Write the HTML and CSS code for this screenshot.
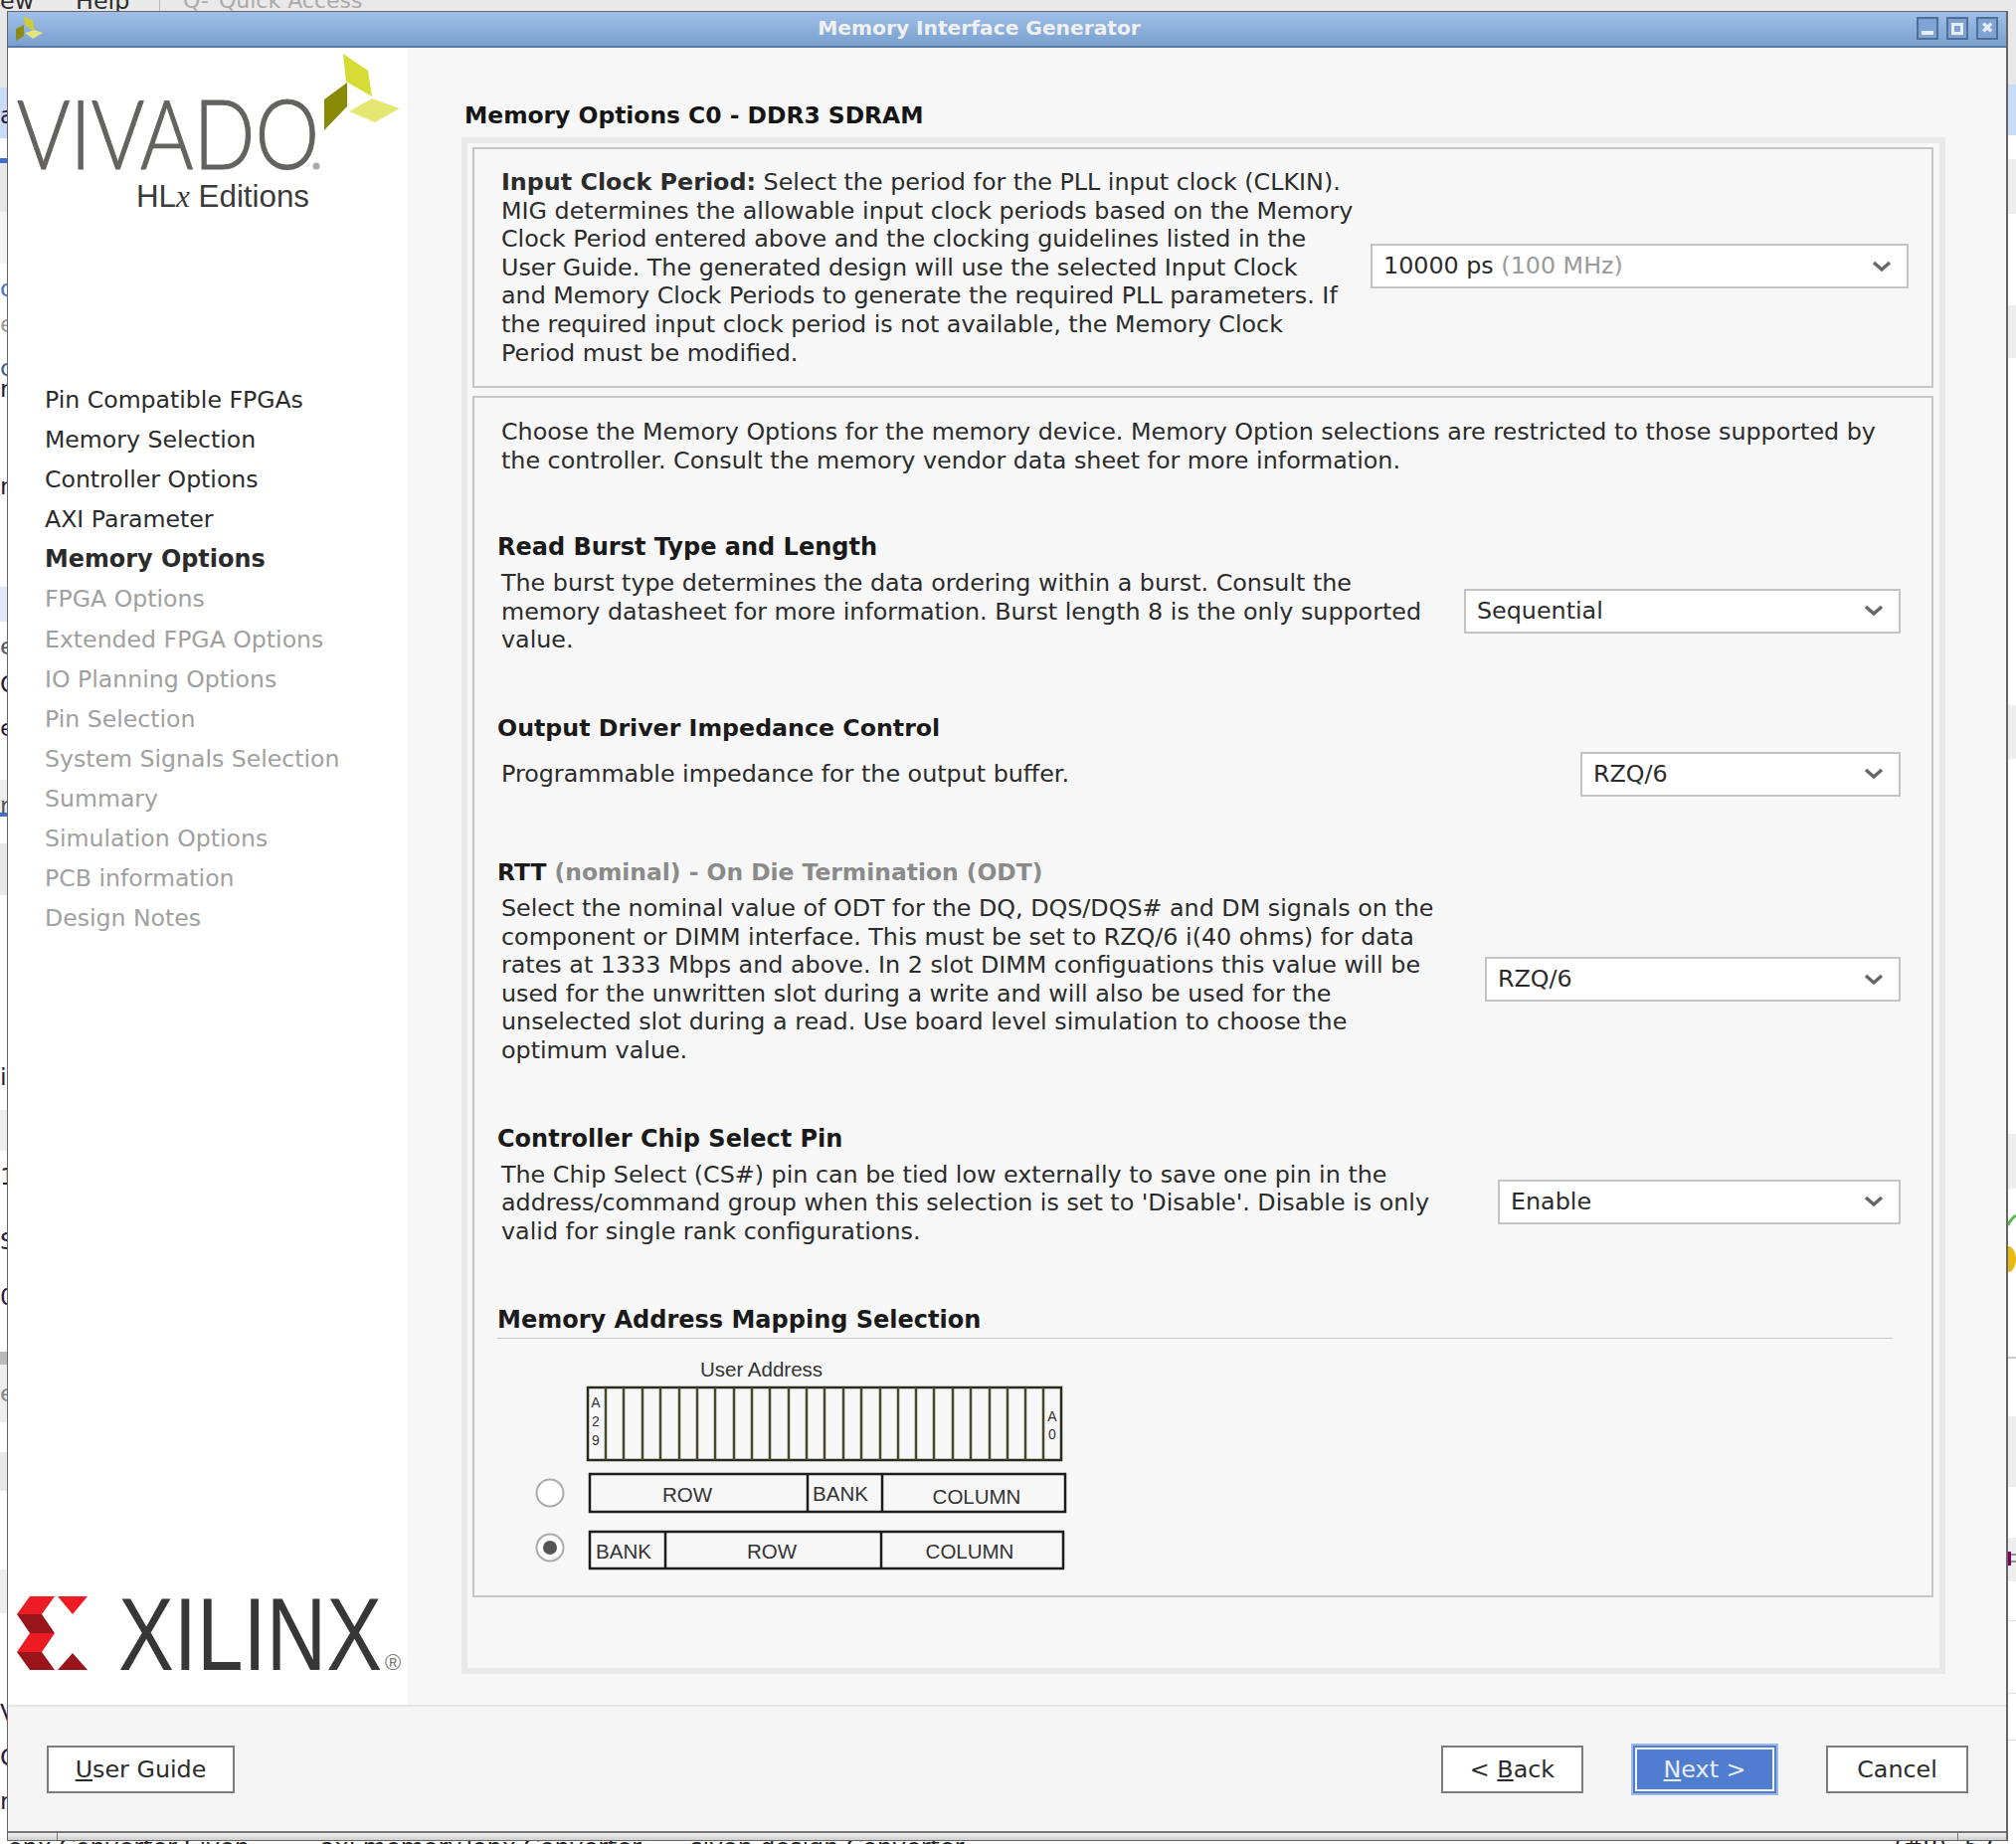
FILE: index.html
```html
<!doctype html>
<html>
<head>
<meta charset="utf-8">
<link rel="stylesheet" href="styles.css">
<title>Memory Interface Generator</title>
</head>
<body>

<div class="backdrop">
  <div class="menubar">
    <span class="menu-a">ew</span>
    <span class="menu-b">Help</span>
    <i class="menu-sep"></i>
    <span class="menu-c">Q-</span>
    <span class="menu-d">Quick Access</span>
  </div>
  <div class="strip-left">
    <span class="frag f1">a</span>
    <span class="frag f2">o</span>
    <span class="frag f3">e</span>
    <span class="frag f4">c</span>
    <span class="frag f5">r</span>
    <span class="frag f6">r</span>
    <span class="frag f7">e</span>
    <span class="frag f8">O</span>
    <span class="frag f9">e</span>
    <span class="frag f10">r</span>
    <span class="frag f11">i</span>
    <span class="frag f12">1</span>
    <span class="frag f13">S</span>
    <span class="frag f14">0</span>
    <span class="frag f15">e</span>
    <span class="frag f16">V</span>
    <span class="frag f17">O</span>
    <span class="frag f18">n</span>
  </div>
  <div class="strip-right">
    <svg class="strip-marks" width="8" height="400" viewBox="0 0 8 400">
      <path d="M0 12 Q3 5 8 2" fill="none" stroke="#57b84a" stroke-width="3"/>
      <ellipse cx="0" cy="46" rx="8" ry="13" fill="#e8b90f"/>
      <rect x="0" y="340" width="3" height="14" fill="#800060"/>
      <path d="M3 343H8M3 350H8" stroke="#333" stroke-width="1"/>
    </svg>
  </div>
  <div class="tabs-under">
    <span class="tab-a">onx Converter Sivon</span>
    <span class="tab-b">axi memory.lonx Converter</span>
    <span class="tab-c">sivon design Converter</span>
    <span class="tab-d">(#8)</span>
    <span class="tab-e">57</span>
  </div>
</div>

<div class="window">
  <div class="titlebar">
    <svg class="title-icon" width="30" height="30" viewBox="0 0 30 30">
      <polygon points="8,0 17,5 19,16 9,9" fill="#cfcb38"/>
      <polygon points="0,13 8,9 8,20 0,25" fill="#8d8a12"/>
      <polygon points="9,17 19,14 27,17 17,23" fill="#e2e480"/>
    </svg>
    <span class="title-text">Memory Interface Generator</span>
    <div class="win-buttons">
      <span class="win-btn"><i class="glyph-min"></i></span>
      <span class="win-btn"><i class="glyph-max"></i></span>
      <span class="win-btn"><b class="glyph-close">&#10006;</b></span>
    </div>
  </div>

  <div class="main">
    <aside class="sidebar">
      <svg class="vivado" width="402" height="190" viewBox="0 0 402 190">
        <text x="9" y="122" class="vivado-word" textLength="304" lengthAdjust="spacingAndGlyphs">VIVADO</text>
        <circle cx="310" cy="119" r="3.5" fill="#aaa"/>
        <text x="129" y="160" class="hlx">HL<tspan class="hlx-x">x</tspan> Editions</text>
        <polygon points="337,6 362,23 366,49 340,34" fill="#d6dc34"/>
        <polygon points="318,52 341,35 341,59 318,83" fill="#888a05"/>
        <polygon points="343,64 366,51 394,61 369,75" fill="#e4e873"/>
      </svg>

      <ul class="steps">
        <li>Pin Compatible FPGAs</li>
        <li>Memory Selection</li>
        <li>Controller Options</li>
        <li>AXI Parameter</li>
        <li class="current">Memory Options</li>
        <li class="todo">FPGA Options</li>
        <li class="todo">Extended FPGA Options</li>
        <li class="todo">IO Planning Options</li>
        <li class="todo">Pin Selection</li>
        <li class="todo">System Signals Selection</li>
        <li class="todo">Summary</li>
        <li class="todo">Simulation Options</li>
        <li class="todo">PCB information</li>
        <li class="todo">Design Notes</li>
      </ul>

      <svg class="xilinx" width="402" height="90" viewBox="0 0 402 90">
        <polygon points="22,0 47,0 34,18 9,18" fill="#ed1c24"/>
        <polygon points="9,18 34,18 47,37 22,37" fill="#9a141c"/>
        <polygon points="22,37 47,37 34,56 9,56" fill="#ed1c24"/>
        <polygon points="9,56 34,56 47,74 22,74" fill="#9a141c"/>
        <polygon points="50,0 80,0 65,18" fill="#ed1c24"/>
        <polygon points="50,74 65,57 80,74" fill="#9a141c"/>
        <text x="111" y="74" class="xilinx-word" textLength="265" lengthAdjust="spacingAndGlyphs">XILINX</text>
        <text x="379" y="74" class="reg">&#174;</text>
      </svg>
    </aside>

    <section class="content">
      <h2 class="page-title">Memory Options C0 - DDR3 SDRAM</h2>
      <div class="outer-panel">
        <div class="panel clock-panel">
          <p class="clock-text"><b>Input Clock Period:</b> Select the period for the PLL input clock (CLKIN).<br>
          MIG determines the allowable input clock periods based on the Memory<br>
          Clock Period entered above and the clocking guidelines listed in the<br>
          User Guide. The generated design will use the selected Input Clock<br>
          and Memory Clock Periods to generate the required PLL parameters. If<br>
          the required input clock period is not available, the Memory Clock<br>
          Period must be modified.</p>
          <div class="select clock-select"><span>10000 ps <em>(100 MHz)</em></span><svg class="chev" width="20" height="12" viewBox="0 0 20 12"><path d="M2 2 L10 9 L18 2" /></svg></div>
        </div>

        <div class="panel options-panel">
          <p class="intro">Choose the Memory Options for the memory device. Memory Option selections are restricted to those supported by<br>
          the controller. Consult the memory vendor data sheet for more information.</p>

          <h3 class="opt-head head-burst">Read Burst Type and Length</h3>
          <div class="opt-row row-burst">
            <p>The burst type determines the data ordering within a burst. Consult the<br>
            memory datasheet for more information. Burst length 8 is the only supported<br>
            value.</p>
            <div class="select sel-burst"><span>Sequential</span><svg class="chev" width="20" height="12" viewBox="0 0 20 12"><path d="M2 2 L10 9 L18 2" /></svg></div>
          </div>

          <h3 class="opt-head head-driver">Output Driver Impedance Control</h3>
          <div class="opt-row row-driver">
            <p>Programmable impedance for the output buffer.</p>
            <div class="select sel-driver"><span>RZQ/6</span><svg class="chev" width="20" height="12" viewBox="0 0 20 12"><path d="M2 2 L10 9 L18 2" /></svg></div>
          </div>

          <h3 class="opt-head head-rtt">RTT <span class="head-dim">(nominal) - On Die Termination (ODT)</span></h3>
          <div class="opt-row row-rtt">
            <p>Select the nominal value of ODT for the DQ, DQS/DQS# and DM signals on the<br>
            component or DIMM interface. This must be set to RZQ/6 i(40 ohms) for data<br>
            rates at 1333 Mbps and above. In 2 slot DIMM configuations this value will be<br>
            used for the unwritten slot during a write and will also be used for the<br>
            unselected slot during a read. Use board level simulation to choose the<br>
            optimum value.</p>
            <div class="select sel-rtt"><span>RZQ/6</span><svg class="chev" width="20" height="12" viewBox="0 0 20 12"><path d="M2 2 L10 9 L18 2" /></svg></div>
          </div>

          <h3 class="opt-head head-chip">Controller Chip Select Pin</h3>
          <div class="opt-row row-chip">
            <p>The Chip Select (CS#) pin can be tied low externally to save one pin in the<br>
            address/command group when this selection is set to 'Disable'. Disable is only<br>
            valid for single rank configurations.</p>
            <div class="select sel-chip"><span>Enable</span><svg class="chev" width="20" height="12" viewBox="0 0 20 12"><path d="M2 2 L10 9 L18 2" /></svg></div>
          </div>

          <h3 class="opt-head head-map">Memory Address Mapping Selection</h3>
          <svg class="mapping" width="640" height="240" viewBox="0 0 640 240">
            <text x="207" y="35" class="map-title">User Address</text>
            <g class="slots" transform="translate(2 0)">
              <rect x="92" y="46" width="476" height="73"/>
              <path d="M110 46V119M128 46V119M147 46V119M165 46V119M184 46V119M202 46V119M220 46V119M239 46V119M257 46V119M275 46V119M294 46V119M312 46V119M330 46V119M349 46V119M367 46V119M386 46V119M404 46V119M422 46V119M440 46V119M459 46V119M477 46V119M496 46V119M514 46V119M532 46V119M550 46V119"/>
              <text class="bit" x="100" y="66">A</text>
              <text class="bit" x="100" y="85">2</text>
              <text class="bit" x="100" y="104">9</text>
              <text class="bit" x="559" y="80">A</text>
              <text class="bit" x="559" y="98">0</text>
            </g>

            <circle cx="56" cy="152" r="13.5" class="radio"/>
            <circle cx="56" cy="207" r="13.5" class="radio"/>
            <circle cx="56" cy="207" r="7" fill="#555"/>

            <g class="rows" transform="translate(2 0)">
              <rect x="94" y="133" width="478" height="38"/>
              <path d="M313 133V171M388 133V171"/>
              <rect x="94" y="191" width="476" height="37"/>
              <path d="M170 191V228M387 191V228"/>
              <text class="cell" x="192" y="161">ROW</text>
              <text class="cell" x="346" y="160">BANK</text>
              <text class="cell" x="483" y="163">COLUMN</text>
              <text class="cell" x="128" y="218">BANK</text>
              <text class="cell" x="277" y="218">ROW</text>
              <text class="cell" x="476" y="218">COLUMN</text>
            </g>
          </svg>
        </div>
      </div>
    </section>
  </div>

  <div class="footer">
    <button class="btn btn-guide"><u>U</u>ser Guide</button>
    <div class="footer-right">
      <button class="btn">&lt; <u>B</u>ack</button>
      <button class="btn btn-next"><u>N</u>ext &gt;</button>
      <button class="btn">Cancel</button>
    </div>
  </div>
  <div class="statusline">
    <i class="status-left"></i>
    <i class="status-right"></i>
  </div>
</div>

</body>
</html>
```

FILE: styles.css
```css
html, body {
    margin: 0;
    padding: 0;
}
body {
    width: 2027px;
    height: 1854px;
    overflow: hidden;
    position: relative;
    background-color: #ffffff;
    font-family: "DejaVu Sans", sans-serif;
    font-size: 23.8px;
    line-height: 28.6px;
    color: #2b2b2b;
}
p, h2, h3, ul {
    margin: 0;
    padding: 0;
}

/* what shows around the dialog */
.backdrop {
    position: absolute;
    left: 0;
    top: 0;
    width: 2027px;
    height: 1854px;
    overflow: hidden;
}
.menubar {
    height: 12px;
    background-color: #e9e9e9;
    position: relative;
    overflow: hidden;
}
.menubar span {
    position: absolute;
    top: -13px;
    white-space: nowrap;
}
.menu-a { left: 0; }
.menu-b { left: 76px; }
.menu-sep {
    position: absolute;
    left: 160px;
    top: 0;
    width: 1px;
    height: 12px;
    background-color: #bbb;
}
.menubar .menu-c { left: 184px; color: #aaa; font-size: 22px; }
.menubar .menu-d { left: 220px; color: #aaa; font-size: 22px; }

.strip-left {
    position: absolute;
    left: 0;
    top: 12px;
    width: 8px;
    height: 1840px;
    overflow: hidden;
    background: linear-gradient(
        #e8e8e8 0, #e8e8e8 76px,
        #c8dbf8 76px, #c8dbf8 127px,
        #fff 127px, #fff 147px,
        #3f6fd0 147px, #3f6fd0 152px,
        #e8e8e8 152px, #e8e8e8 201px,
        #f3f3f3 201px, #f3f3f3 253px,
        #fff 253px, #fff 578px,
        #dfe8f7 578px, #dfe8f7 613px,
        #fff 613px, #fff 772px,
        #eee 772px, #eee 805px,
        #3f6fd0 805px, #3f6fd0 809px,
        #fff 809px, #fff 836px,
        #e8e8e8 836px, #e8e8e8 888px,
        #fff 888px, #fff 1104px,
        #eee 1104px, #eee 1145px,
        #fff 1145px, #fff 1347px,
        #bbb 1347px, #bbb 1360px,
        #eee 1360px, #eee 1418px,
        #fff 1418px, #fff 1448px,
        #e8e8e8 1448px, #e8e8e8 1487px,
        #fff 1487px, #fff 1566px,
        #eee 1566px, #eee 1610px,
        #fff 1610px
    );
}
.frag {
    position: absolute;
    left: 0;
    line-height: 24px;
    color: #2a1a40;
}
.f1 { top: 92px; }
.f2 { top: 266px; color: #3f6fd0; }
.f3 { top: 302px; color: #999; }
.f4 { top: 346px; color: #3a5f90; }
.f5 { top: 367px; }
.f6 { top: 465px; }
.f7 { top: 626px; color: #556; }
.f8 { top: 664px; }
.f9 { top: 708px; }
.f10 { top: 786px; color: #556; }
.f11 { top: 1059px; }
.f12 { top: 1159px; }
.f13 { top: 1224px; }
.f14 { top: 1280px; }
.f15 { top: 1377px; color: #888; }
.f16 { top: 1698px; }
.f17 { top: 1743px; }
.f18 { top: 1787px; }

.strip-right {
    position: absolute;
    left: 2019px;
    top: 12px;
    width: 8px;
    height: 1840px;
    overflow: hidden;
    background: linear-gradient(
        #e8e8e8 0, #e8e8e8 73px,
        #c8dbf8 73px, #c8dbf8 124px,
        #fff 124px, #fff 148px,
        #eee 148px, #eee 203px,
        #fff 203px, #fff 295px,
        #eee 295px, #eee 348px,
        #fff 348px, #fff 697px,
        #eee 697px, #eee 751px,
        #fff 751px, #fff 1128px,
        #eee 1128px, #eee 1183px,
        #fff 1183px, #fff 1352px,
        #ccc 1352px, #ccc 1354px,
        #fff 1354px, #fff 1412px,
        #eee 1412px, #eee 1483px,
        #fff 1483px, #fff 1534px,
        #eee 1534px, #eee 1578px,
        #fff 1578px, #fff 1617px,
        #ddd 1617px, #ddd 1618px,
        #fff 1618px, #fff 1690px,
        #ddd 1690px, #ddd 1691px,
        #fff 1691px, #fff 1737px,
        #ddd 1737px, #ddd 1738px,
        #fff 1738px
    );
}
.strip-marks {
    position: absolute;
    left: 0;
    top: 1208px;
}
.tabs-under {
    position: absolute;
    left: 0;
    top: 1851px;
    width: 2027px;
    height: 3px;
    overflow: hidden;
    background-color: #fff;
}
.tabs-under span {
    position: absolute;
    top: -8px;
    white-space: nowrap;
    color: #222;
}
.tab-a { left: 8px; }
.tab-b { left: 322px; }
.tab-c { left: 694px; }
.tab-d { left: 1904px; }
.tab-e { left: 1975px; }

/* dialog */
.window {
    position: absolute;
    left: 7px;
    top: 11px;
    width: 2012px;
    height: 1840px;
    box-sizing: border-box;
    border-style: solid;
    border-color: #666;
    border-width: 1px 2px 1px 1px;
    background-color: #f7f7f7;
    display: flex;
    flex-direction: column;
}
.titlebar {
    height: 34px;
    flex: none;
    background: linear-gradient(#9fbfe8, #7aa0cf);
    border-bottom: 2px solid #5679a8;
    position: relative;
    display: flex;
    align-items: center;
    justify-content: center;
}
.title-icon {
    position: absolute;
    left: 8px;
    top: 4px;
}
.title-text {
    color: #f0f0f0;
    font-weight: bold;
    font-size: 20.2px;
    margin-right: 56px;
    margin-top: -1px;
}
.win-buttons {
    position: absolute;
    right: 8px;
    top: 5px;
    display: flex;
    gap: 8px;
}
.win-btn {
    width: 22px;
    height: 23px;
    box-sizing: border-box;
    border: 2px solid #4f6f98;
    background-color: #7fa3d3;
    display: flex;
    align-items: center;
    justify-content: center;
}
.glyph-min {
    width: 12px;
    height: 4px;
    background-color: #e8eef7;
    margin-top: 8px;
}
.glyph-max {
    width: 6px;
    height: 6px;
    border: 3px solid #e8eef7;
}
.glyph-close {
    color: #e8eef7;
    font-size: 15px;
    line-height: 15px;
}

.main {
    flex: none;
    height: 1666px;
    display: flex;
}
.sidebar {
    width: 402px;
    flex: none;
    background-color: #ffffff;
    display: flex;
    flex-direction: column;
}
.vivado {
    display: block;
    flex: none;
}
.vivado-word {
    font-family: Lato, sans-serif;
    font-weight: 300;
    font-size: 96px;
    fill: #646360;
    stroke: #646360;
    stroke-width: 1.2;
}
.hlx {
    font-family: "Liberation Sans", sans-serif;
    font-size: 31.3px;
    fill: #3a3a3a;
}
.hlx-x {
    font-family: "Liberation Serif", serif;
    font-style: italic;
}
.steps {
    list-style: none;
    margin-top: 144px;
    margin-left: 37px;
}
.steps li {
    height: 40.1px;
    line-height: 40.1px;
    white-space: nowrap;
    font-size: 23.6px;
}
.steps .current {
    font-weight: bold;
    font-size: 23.9px;
}
.steps .todo {
    color: #a0a0a0;
}
.xilinx {
    display: block;
    margin-top: auto;
    margin-bottom: 19px;
    flex: none;
}
.xilinx-word {
    font-family: "Liberation Sans", sans-serif;
    font-size: 104px;
    fill: #373737;
}
.reg {
    font-family: "Liberation Sans", sans-serif;
    font-size: 22px;
    fill: #777;
}

.content {
    flex: 1;
    padding: 0 54px 0 56px;
}
.page-title {
    font-size: 23.4px;
    line-height: 30px;
    padding: 53px 0 7px 0;
    margin-left: 1px;
    color: #151515;
}
.outer-panel {
    width: 1492px;
    height: 1545px;
    box-sizing: border-box;
    border: 6px solid #e8e8e8;
    padding: 4px 6px 0 5px;
    margin-left: -2px;
}
.panel {
    border: 2px solid #c6c6c6;
    box-sizing: border-box;
}
.clock-panel {
    height: 242px;
    margin-bottom: 8px;
    padding: 19px 0 0 27px;
    position: relative;
}
.clock-text {
    white-space: nowrap;
}
.select {
    background-color: #ffffff;
    border: 2px solid #c4c4c4;
    box-sizing: border-box;
    height: 45px;
    display: flex;
    align-items: center;
    justify-content: space-between;
    padding: 0 15px 0 11px;
    flex: none;
    white-space: nowrap;
}
.select em {
    font-style: normal;
    color: #9a9a9a;
}
.chev {
    display: block;
    fill: none;
    stroke: #666;
    stroke-width: 3.4;
}
.clock-select {
    position: absolute;
    left: 901px;
    top: 95px;
    width: 541px;
}
.options-panel {
    height: 1208px;
    padding: 20px 0 0 23px;
}
.intro {
    white-space: nowrap;
    margin-left: 4px;
}
.opt-head {
    font-size: 24px;
    line-height: 30px;
    font-weight: bold;
    white-space: nowrap;
    color: #1a1a1a;
}
.head-dim {
    color: #8a8a8a;
}
.opt-row {
    display: flex;
    justify-content: space-between;
    align-items: center;
    padding-left: 4px;
    padding-right: 31px;
}
.opt-row p {
    white-space: nowrap;
}
.head-burst { margin-top: 58px; }
.row-burst { margin-top: 7px; }
.sel-burst { width: 439px; margin-top: -2px; }
.head-driver { margin-top: 59px; font-size: 23.7px; }
.row-driver { margin-top: 9px; }
.sel-driver { width: 322px; }
.head-rtt { margin-top: 61px; font-size: 23.4px; }
.row-rtt { margin-top: 7px; }
.sel-rtt { width: 418px; }
.head-chip { margin-top: 59px; }
.row-chip { margin-top: 7px; }
.sel-chip { width: 405px; margin-top: -2px; }
.head-map {
    margin-top: 60px;
    width: 1403px;
    border-bottom: 1px solid #c8c8c8;
    padding-bottom: 3px;
}
.mapping {
    display: block;
    margin: 3px 0 0 -3px;
}
.map-title {
    font-family: "Liberation Sans", sans-serif;
    font-size: 20.5px;
    fill: #333;
}
.slots rect, .slots path {
    fill: none;
    stroke: #47472c;
    stroke-width: 2.5;
}
.slots rect {
    stroke: #2a2a1c;
}
.rows rect, .rows path {
    fill: none;
    stroke: #1c1c1c;
    stroke-width: 2.5;
}
.bit {
    font-family: "Liberation Sans", sans-serif;
    font-size: 14px;
    text-anchor: middle;
    fill: #333;
}
.cell {
    font-family: "Liberation Sans", sans-serif;
    font-size: 20.5px;
    text-anchor: middle;
    fill: #333;
}
.radio {
    fill: #ffffff;
    stroke: #aaa;
    stroke-width: 2;
}

.footer {
    flex: 1;
    border-top: 2px solid #e6e6e6;
    background-color: #f5f5f5;
    display: flex;
    align-items: flex-start;
    justify-content: space-between;
    padding: 39px 39px 0 39px;
}
.footer-right {
    display: flex;
    gap: 48px;
    align-items: center;
    margin-top: -2px;
    margin-right: -1px;
}
.btn {
    font-family: "DejaVu Sans", sans-serif;
    font-size: 23.8px;
    color: #2b2b2b;
    background-color: #ffffff;
    border: 2px solid #7c7c7c;
    height: 48px;
    width: 143px;
    padding: 0;
}
.btn-guide {
    width: 189px;
}
.btn-next {
    width: 148px;
    height: 52px;
    background-color: #517dd1;
    color: #e8eefa;
    border: 2px solid #9db7e6;
    outline: 2px solid #f2f5fb;
    outline-offset: -6px;
}
.statusline {
    height: 7px;
    flex: none;
    border-top: 2px solid #777;
    background: linear-gradient(#f0f0f0, #d0d0d0);
    position: relative;
}
.status-left {
    position: absolute;
    left: 49px;
    top: 0;
    width: 1px;
    height: 7px;
    background-color: #777;
}
.status-right {
    position: absolute;
    left: 1960px;
    top: 0;
    width: 1px;
    height: 7px;
    background-color: #777;
}
```
